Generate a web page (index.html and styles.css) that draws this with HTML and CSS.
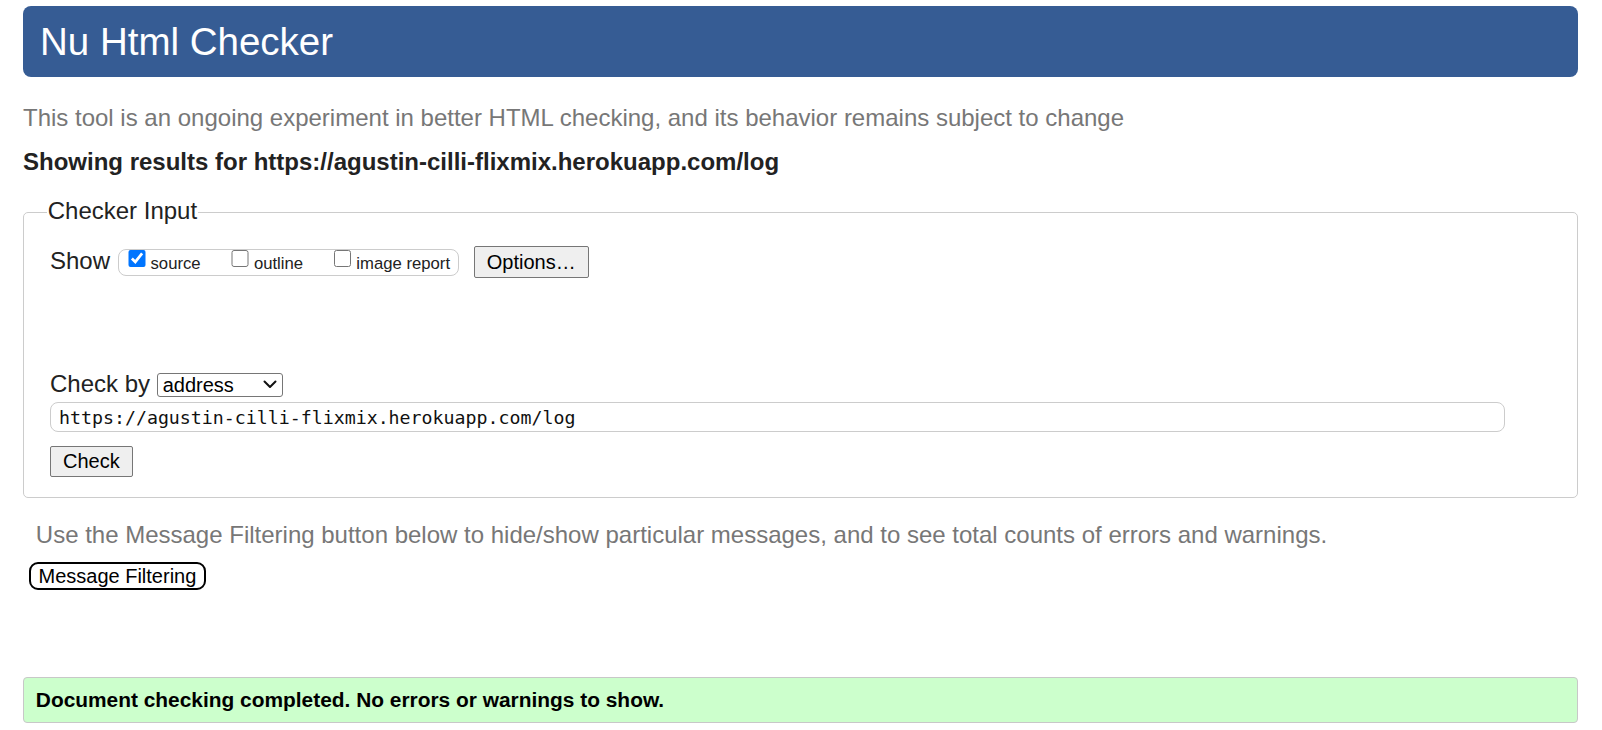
FILE: index.html
```html
<!DOCTYPE html>
<html lang="en">
<head>
<meta charset="utf-8">
<title>Nu Html Checker</title>
<link rel="stylesheet" href="styles.css">
</head>
<body>
<div class="page">
  <h1 class="title">Nu Html Checker</h1>
  <p class="intro">This tool is an ongoing experiment in better HTML checking, and its behavior remains subject to change</p>
  <p class="results-for">Showing results for https://agustin-cilli-flixmix.herokuapp.com/log</p>
  <fieldset class="checker">
    <legend class="checker-legend">Checker Input</legend>
    <div class="show-row">
      <span class="show-label">Show</span>
      <div class="show-group">
        <label class="opt"><input type="checkbox" class="cb" checked><span class="opt-text">source</span></label>
        <label class="opt"><input type="checkbox" class="cb"><span class="opt-text">outline</span></label>
        <label class="opt"><input type="checkbox" class="cb"><span class="opt-text">image report</span></label>
      </div>
      <button class="btn btn-options" type="button">Options…</button>
    </div>
    <div class="checkby-line">
      <label class="checkby-label">Check by</label> <span class="select-wrap"><select class="checkby-select"><option>address</option><option>file upload</option><option>text input</option></select><svg class="select-chevron" width="14" height="9" viewBox="0 0 14 9" aria-hidden="true"><path d="M1.5 1.5 L7 7 L12.5 1.5" fill="none" stroke="#111" stroke-width="2" stroke-linecap="round" stroke-linejoin="round"/></svg></span>
    </div>
    <input class="url-input" type="url" value="https://agustin-cilli-flixmix.herokuapp.com/log">
    <button class="btn btn-check" type="submit">Check</button>
  </fieldset>
  <p class="filter-note">Use the Message Filtering button below to hide/show particular messages, and to see total counts of errors and warnings.</p>
  <button class="btn-filter" type="button">Message Filtering</button>
  <div class="success">Document checking completed. No errors or warnings to show.</div>
</div>
</body>
</html>
```
FILE: styles.css
```css
html, body {
  margin: 0;
  padding: 0;
  background: #ffffff;
}
body {
  font-family: "Liberation Sans", Arial, sans-serif;
  font-size: 24px;
  color: #222222;
}
.page {
  padding: 6px 24px 0 23px;
}
.title {
  margin: 0;
  height: 71px;
  line-height: 71px;
  padding-left: 17px;
  font-size: 38.5px;
  font-weight: normal;
  color: #ffffff;
  background: #365c94;
  border-radius: 8px;
}
.intro {
  margin: 26.75px 0 0;
  line-height: 28px;
  color: #777777;
}
.results-for {
  margin: 16px 0 0;
  line-height: 28px;
  font-weight: bold;
  color: #222222;
}
.checker {
  margin: 21.2px 0 0;
  padding: 17.5px 26px 20px 26px;
  border: 1px solid #cccccc;
  border-radius: 5px;
  min-width: 0;
}
.checker-legend {
  margin-left: -3.3px;
  padding: 0 1px 4px;
  line-height: 28px;
  font-size: 24px;
}
.show-row {
  display: flex;
  align-items: flex-start;
  height: 32px;
}
.show-label {
  margin-top: 1px;
  line-height: 28px;
}
.show-group {
  display: flex;
  align-items: flex-start;
  box-sizing: border-box;
  height: 27px;
  margin: 2.3px 0 0 8.2px;
  padding: 0 7.7px 0 8.6px;
  border: 1px solid #cccccc;
  border-radius: 8px;
}
.opt {
  display: flex;
  align-items: flex-start;
  margin-right: 30.6px;
}
.opt:last-child {
  margin-right: 0;
}
.cb {
  width: 17.7px;
  height: 17.7px;
  margin: 0 5px 0 0;
  accent-color: #0075ff;
}
.opt-text {
  padding-top: 1px;
  font-size: 16.7px;
  line-height: 25px;
  color: #222222;
}
.btn {
  box-sizing: border-box;
  padding: 0 12px;
  font-family: "Liberation Sans", Arial, sans-serif;
  font-size: 20px;
  color: #000000;
  background: #efefef;
  border: 1px solid #767676;
  border-radius: 2px;
}
.btn-options {
  height: 32px;
  margin-left: 15px;
}
.checkby-line {
  margin-top: 91.45px;
  line-height: 28px;
}
.select-wrap {
  position: relative;
  display: inline-block;
}
.checkby-select {
  box-sizing: border-box;
  width: 126px;
  height: 24.3px;
  padding: 0 0 0 5px;
  font-family: "Liberation Sans", Arial, sans-serif;
  font-size: 20px;
  color: #000000;
  background: #ffffff;
  border: 1px solid #767676;
  border-radius: 3px;
  vertical-align: baseline;
  -webkit-appearance: none;
  appearance: none;
}
.select-chevron {
  position: absolute;
  right: 6px;
  top: 50%;
  margin-top: -4px;
  pointer-events: none;
}
.url-input {
  display: block;
  box-sizing: border-box;
  width: 1455px;
  height: 30.3px;
  margin-top: 4.25px;
  padding: 0 8px;
  font-family: "DejaVu Sans Mono", "Liberation Mono", monospace;
  font-size: 18.25px;
  color: #111111;
  border: 1px solid #cccccc;
  border-radius: 8px;
  outline: none;
}
.btn-check {
  display: block;
  height: 31px;
  margin-top: 13.3px;
}
.filter-note {
  margin: 23.3px 0 0;
  padding-left: 12.8px;
  line-height: 28px;
  color: #777777;
}
.btn-filter {
  display: block;
  box-sizing: border-box;
  height: 28px;
  margin: 13px 0 0 6px;
  padding: 0 7.5px;
  font-family: "Liberation Sans", Arial, sans-serif;
  font-size: 20px;
  line-height: 24px;
  color: #000000;
  background: #ffffff;
  border: 2px solid #000000;
  border-radius: 9px;
}
.success {
  box-sizing: border-box;
  height: 46.3px;
  margin-top: 86.5px;
  padding-left: 11.8px;
  font-size: 20.9px;
  font-weight: bold;
  line-height: 44.3px;
  color: #000000;
  background: #ccffcc;
  border: 1px solid #c8c8c8;
  border-radius: 4px;
}
```
